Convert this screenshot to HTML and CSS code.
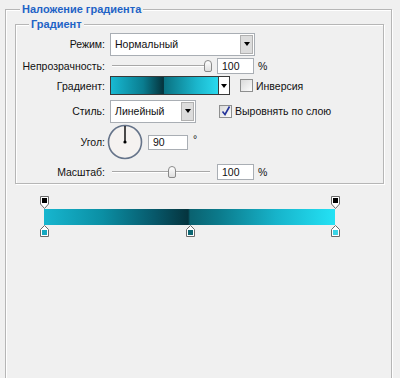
FILE: index.html
```html
<!DOCTYPE html>
<html lang="ru">
<head>
    <meta charset="UTF-8">
    <title>Наложение градиента</title>
    <link rel="stylesheet" href="styles.css">
</head>
<body>
    <!-- Outer group -->
    <fieldset class="group">
        <legend>Наложение градиента</legend>

        <!-- Inner group with the settings -->
        <fieldset class="group inner">
            <legend>Градиент</legend>

            <div class="row row-mode">
                <span class="label">Режим:</span>
                <div class="select wide">
                    <span class="select-text">Нормальный</span>
                    <span class="select-btn"><i class="arrow"></i></span>
                </div>
            </div>

            <div class="row row-opacity">
                <span class="label">Непрозрачность:</span>
                <div class="slider">
                    <div class="track"></div>
                    <div class="thumb" style="left: 94px;"></div>
                </div>
                <span class="num">100</span>
                <span class="unit">%</span>
            </div>

            <div class="row row-grad">
                <span class="label">Градиент:</span>
                <div class="swatch">
                    <div class="swatch-fill"></div>
                    <span class="swatch-btn"><i class="arrow"></i></span>
                </div>
                <span class="check gap-inv"></span>
                <span class="check-text">Инверсия</span>
            </div>

            <div class="row row-style">
                <span class="label">Стиль:</span>
                <div class="select narrow">
                    <span class="select-text">Линейный</span>
                    <span class="select-btn"><i class="arrow"></i></span>
                </div>
                <span class="check checked gap-align">
                    <svg width="10" height="10" viewBox="0 0 10 10"><path d="M1.5 5.5 L4 8.5 L8.5 0.5" fill="none" stroke="#23339a" stroke-width="1.6"/></svg>
                </span>
                <span class="check-text">Выровнять по слою</span>
            </div>

            <div class="row row-angle">
                <span class="label">Угол:</span>
                <svg class="dial" width="36" height="36" viewBox="0 0 36 36">
                    <circle cx="18" cy="18" r="16.5" fill="#f5f2f0" stroke="#66748a" stroke-width="1.6"/>
                    <line x1="18" y1="18" x2="18" y2="2" stroke="#000" stroke-width="1.4"/>
                    <circle cx="18" cy="18" r="1.6" fill="#000"/>
                </svg>
                <span class="num angle">90</span>
                <span class="unit deg">°</span>
            </div>

            <div class="row row-scale">
                <span class="label">Масштаб:</span>
                <div class="slider">
                    <div class="track"></div>
                    <div class="thumb" style="left: 58px;"></div>
                </div>
                <span class="num">100</span>
                <span class="unit">%</span>
            </div>
        </fieldset>

        <!-- Gradient editor bar -->
        <div class="editor">
            <div class="bar"></div>

            <svg class="stop top" style="left: 0%;" width="9" height="13" viewBox="0 0 9 13">
                <polygon points="0.5,0.5 8.5,0.5 8.5,8 4.5,12.5 0.5,8" fill="#fff" stroke="#6a6a6a"/>
                <rect x="2" y="2" width="5" height="5" fill="#000"/>
            </svg>
            <svg class="stop top" style="left: 100%;" width="9" height="13" viewBox="0 0 9 13">
                <polygon points="0.5,0.5 8.5,0.5 8.5,8 4.5,12.5 0.5,8" fill="#fff" stroke="#6a6a6a"/>
                <rect x="2" y="2" width="5" height="5" fill="#000"/>
            </svg>

            <svg class="stop bottom" style="left: 0%;" width="9" height="12" viewBox="0 0 9 12">
                <polygon points="0.5,11.5 0.5,4.5 4.5,0.5 8.5,4.5 8.5,11.5" fill="#fff" stroke="#6a6a6a"/>
                <rect x="2" y="5" width="5" height="5" fill="#14a8c0"/>
            </svg>
            <svg class="stop bottom" style="left: 50.2%;" width="9" height="12" viewBox="0 0 9 12">
                <polygon points="0.5,11.5 0.5,4.5 4.5,0.5 8.5,4.5 8.5,11.5" fill="#fff" stroke="#6a6a6a"/>
                <rect x="2" y="5" width="5" height="5" fill="#0b6672"/>
            </svg>
            <svg class="stop bottom" style="left: 100%;" width="9" height="12" viewBox="0 0 9 12">
                <polygon points="0.5,11.5 0.5,4.5 4.5,0.5 8.5,4.5 8.5,11.5" fill="#fff" stroke="#6a6a6a"/>
                <rect x="2" y="5" width="5" height="5" fill="#3ad4e6"/>
            </svg>
        </div>
    </fieldset>
</body>
</html>
```

FILE: styles.css
```css
html, body {
    overflow: hidden;
}
body {
    margin: 0;
    background-color: #f0f0f0;
    font-family: "Liberation Sans", Arial, sans-serif;
    font-size: 10.5px;
    color: #111;
}

/* Group boxes */
.group {
    margin: 3px 8px 0 5px;
    padding: 0;
    height: 380px;
    border: 1px solid #b6b6b6;
    box-shadow: 1px 1px 0 #fff, inset 1px 1px 0 #fff;
}
.group legend {
    margin-left: 14px;
    padding: 0 2px;
    line-height: 13px;
    font-size: 11px;
    font-weight: bold;
    color: #1f63c6;
    background-color: #f0f0f0;
}
.group.inner {
    height: auto;
    margin: 2px 7px 0 9px;
    padding: 1px 0 1px 0;
}
.group.inner legend {
    margin-left: 13px;
}

/* Rows */
.row {
    display: flex;
    align-items: center;
}
.label {
    width: 89px;
    margin-right: 5px;
    text-align: right;
}
.row-mode { height: 24px; }
.row-opacity { height: 19px; }
.row-grad { height: 21px; }
.row-style { height: 24px; margin-top: 3px; }
.row-angle { height: 36px; margin-top: 1px; }
.row-scale { height: 20px; margin-top: 2px; }

/* Drop-down lists */
.select {
    display: flex;
    align-items: stretch;
    height: 21px;
    background-color: #fff;
    border: 1px solid #a9aeb4;
}
.select.wide { width: 143px; }
.select.narrow { width: 84px; }
.select-text {
    flex: 1;
    padding-left: 4px;
    line-height: 21px;
}
.select-btn {
    display: flex;
    align-items: center;
    justify-content: center;
    width: 11px;
    margin: 1px;
    background-color: #dcdcdc;
    border: 1px solid #b0b0b0;
}
.arrow {
    width: 0;
    height: 0;
    border-left: 3px solid transparent;
    border-right: 3px solid transparent;
    border-top: 4px solid #000;
}

/* Sliders */
.slider {
    position: relative;
    width: 103px;
    height: 12px;
}
.track {
    margin: 5px 0 0 2px;
    width: 98px;
    height: 1px;
    background-color: #a8a8a8;
    border-bottom: 1px solid #fff;
}
.thumb {
    position: absolute;
    top: 0;
    width: 6px;
    height: 10px;
    background: linear-gradient(#ffffff, #dedede);
    border: 1px solid #8a8a8a;
    border-radius: 4px 4px 2px 2px;
}

/* Number boxes */
.num {
    width: 31px;
    height: 14px;
    margin-left: 4px;
    padding-left: 4px;
    line-height: 14px;
    background-color: #fff;
    border: 1px solid #a9aeb4;
}
.num.angle {
    width: 34px;
    height: 13px;
    line-height: 13px;
    margin-left: 5px;
}
.unit {
    margin-left: 4px;
}
.deg {
    align-self: flex-start;
    margin-top: 9px;
    margin-left: 5px;
}
.dial {
    margin-left: -3px;
}

/* Gradient swatch */
.swatch {
    display: flex;
    height: 17px;
    border: 1px solid #3a3a3a;
}
.swatch-fill {
    width: 107px;
    background: linear-gradient(to right, #18b9d2 0%, #0a7d90 30%, #05333c 49%, #0a7282 50%, #1bb6cc 80%, #2ad9ee 100%);
}
.swatch-btn {
    display: flex;
    align-items: center;
    justify-content: center;
    width: 10px;
    background-color: #fff;
    border-left: 1px solid #3a3a3a;
}

/* Check boxes */
.check {
    display: flex;
    align-items: center;
    justify-content: center;
    width: 11px;
    height: 11px;
    background: linear-gradient(135deg, #dadada, #fcfcfc);
    border: 1px solid #8e8f8f;
}
.gap-inv { margin-left: 10px; }
.gap-align { margin-left: 23px; }
.check-text {
    margin-left: 3px;
}

/* Gradient editor */
.editor {
    position: relative;
    width: 291px;
    margin: 12px 0 0 38px;
    padding: 13px 0 14px;
}
.bar {
    height: 16px;
    background: linear-gradient(to right, #17b6cf 0%, #0b8fa4 20%, #07586a 38%, #05343e 49.5%, #0a6270 50.2%, #0b7a8b 60%, #17b4cb 80%, #24e2f5 100%);
}
.stop {
    position: absolute;
    margin-left: -4px;
}
.stop.top { top: 0; }
.stop.bottom { bottom: 2px; }
```
